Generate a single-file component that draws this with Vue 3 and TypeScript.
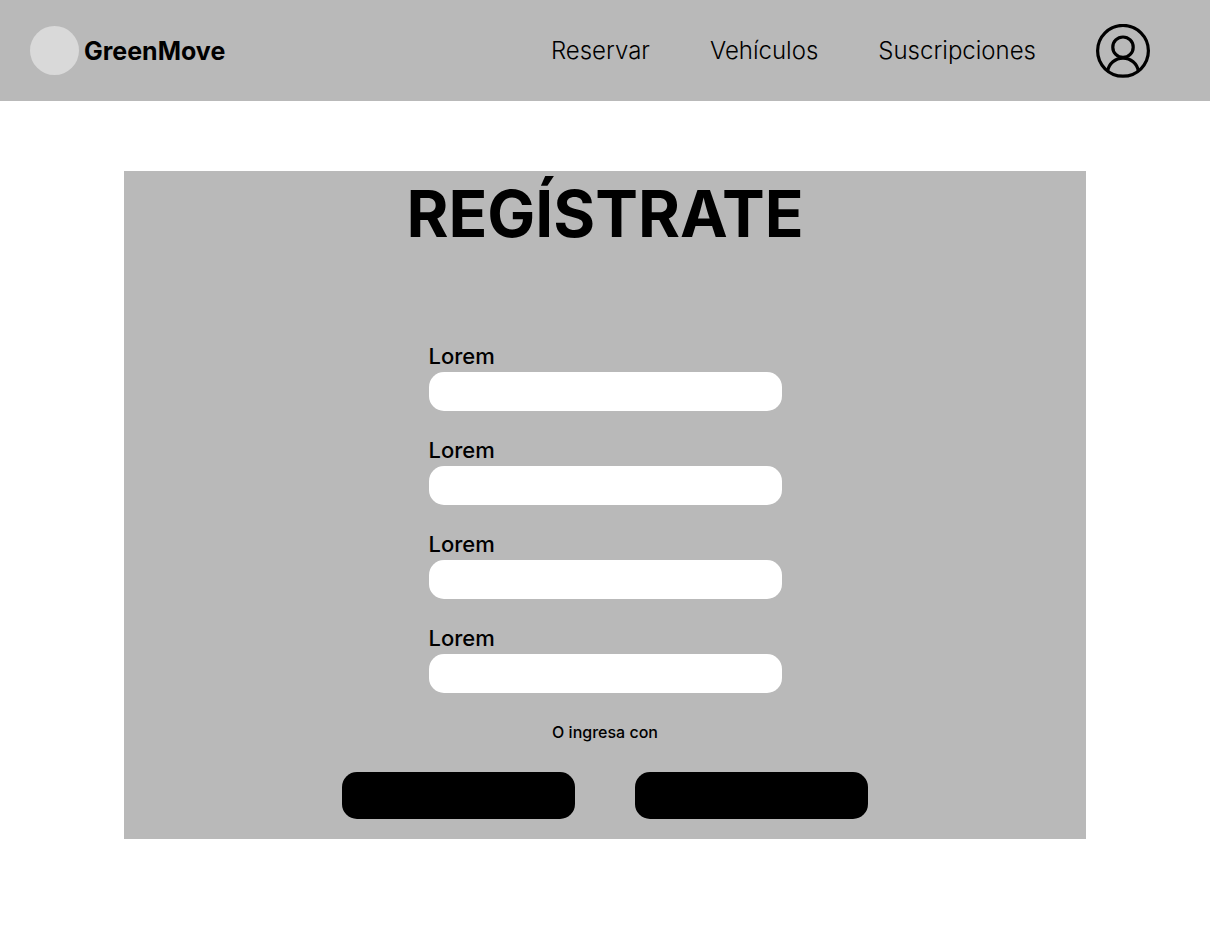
<script setup lang="ts">
import { reactive } from 'vue'

interface Field {
  id: string
  label: string
  value: string
}

const links: string[] = ['Reservar', 'Vehículos', 'Suscripciones']

const fields = reactive<Field[]>(
  [1, 2, 3, 4].map((n) => ({ id: `field-${n}`, label: 'Lorem', value: '' })),
)

const providers: string[] = ['first', 'second']
</script>

<template>
  <div class="page">
    <header class="header">
      <a class="brand" href="#">
        <span class="logo"></span>
        <span>GreenMove</span>
      </a>
      <nav class="nav">
        <a v-for="link in links" :key="link" class="link" href="#">{{ link }}</a>
        <a class="profile" href="#">
          <svg viewBox="0 0 54 54" fill="none" stroke="currentColor" stroke-width="3.2" aria-hidden="true">
            <circle cx="27" cy="26.8" r="25.4" />
            <circle cx="27" cy="23.2" r="10.2" />
            <path d="M11.6 47.2A15.6 15.6 0 0 1 42.4 47.2" />
          </svg>
        </a>
      </nav>
    </header>

    <main class="main">
      <section class="card">
        <h1 class="title">REGÍSTRATE</h1>
        <form class="form" @submit.prevent>
          <div v-for="field in fields" :key="field.id" class="field">
            <label class="label" :for="field.id">{{ field.label }}</label>
            <input :id="field.id" v-model="field.value" class="input" type="text" />
          </div>
        </form>
        <p class="note">O ingresa con</p>
        <div class="providers">
          <button v-for="provider in providers" :key="provider" class="provider" type="button"></button>
        </div>
      </section>
    </main>
  </div>
</template>

<style>
body {
  margin: 0;
  background: #ffffff;
}
</style>

<style scoped>
.page {
  font-family: Inter, "Liberation Sans", sans-serif;
  color: #000000;
}

.header {
  display: flex;
  align-items: center;
  justify-content: space-between;
  box-sizing: border-box;
  min-height: 101px;
  padding: 0 60px 0 30px;
  background: #b9b9b9;
}

.brand {
  display: flex;
  align-items: center;
  gap: 5px;
  color: inherit;
  font-size: 25px;
  font-weight: 700;
  text-decoration: none;
}

.logo {
  width: 49px;
  height: 49px;
  border-radius: 50%;
  background: #d9d9d9;
}

.nav {
  display: flex;
  align-items: center;
  gap: 60px;
}

.link {
  color: inherit;
  font-size: 24px;
  font-weight: 350;
  text-decoration: none;
}

.profile {
  display: flex;
  color: inherit;
}

.profile svg {
  width: 54px;
  height: 54px;
}

.main {
  padding: 70px 124px;
}

.card {
  display: flex;
  flex-direction: column;
  align-items: center;
  padding: 4px 20px 20px;
  background: #b9b9b9;
}

.title {
  margin: 0 0 90px;
  font-size: 64px;
  font-weight: 700;
  line-height: 78px;
}

.form {
  display: flex;
  flex-direction: column;
  gap: 26px;
  width: 100%;
  max-width: 353px;
}

.field {
  display: flex;
  flex-direction: column;
  gap: 3px;
}

.label {
  font-size: 22px;
  font-weight: 500;
  line-height: 26px;
}

.input {
  box-sizing: border-box;
  width: 100%;
  height: 39px;
  padding: 0 15px;
  border: 0;
  border-radius: 15px;
  background: #ffffff;
  font: inherit;
  font-size: 16px;
}

.note {
  margin: 30px 0;
  font-size: 16px;
  font-weight: 500;
  line-height: 19px;
}

.providers {
  display: flex;
  flex-wrap: wrap;
  justify-content: center;
  gap: 60px;
}

.provider {
  width: 233px;
  height: 47px;
  padding: 0;
  border: 0;
  border-radius: 15px;
  background: #000000;
  cursor: pointer;
}
</style>
